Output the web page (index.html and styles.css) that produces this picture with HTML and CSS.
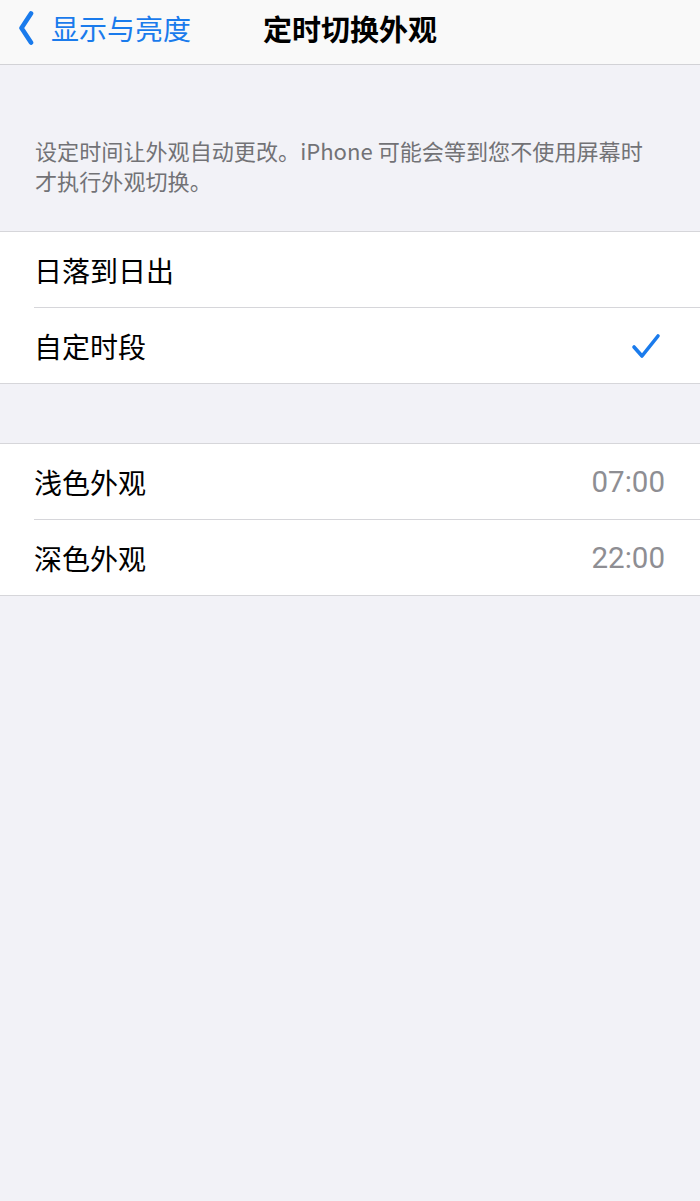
FILE: index.html
```html
<!DOCTYPE html>
<html lang="zh-CN">
<head>
<meta charset="utf-8">
<title>定时切换外观</title>
<link rel="stylesheet" href="styles.css">
</head>
<body>
<header class="nav">
  <div class="back">
    <svg class="chev" width="16" height="36" viewBox="0 0 16 36"><path d="M13 3.5 L3.5 18 L13 32.5" fill="none" stroke="#1a7bec" stroke-width="4.6" stroke-linecap="round" stroke-linejoin="round"/></svg>
    <span class="back-text">显示与亮度</span>
  </div>
  <div class="title">定时切换外观</div>
</header>
<main class="content">
  <p class="footer-note">设定时间让外观自动更改。iPhone 可能会等到您不使用屏幕时才执行外观切换。</p>
  <section class="group">
    <div class="row"><div class="row-inner"><span class="label">日落到日出</span></div></div>
    <div class="row"><div class="row-inner last"><span class="label">自定时段</span>
      <svg class="check" width="30" height="26" viewBox="0 0 30 26"><path d="M3 14 L11 23 L27 3" fill="none" stroke="#1a7bec" stroke-width="3.6" stroke-linecap="round" stroke-linejoin="round"/></svg>
    </div></div>
  </section>
  <div class="spacer"></div>
  <section class="group">
    <div class="row"><div class="row-inner"><span class="label">浅色外观</span><span class="value">07:00</span></div></div>
    <div class="row"><div class="row-inner last"><span class="label">深色外观</span><span class="value">22:00</span></div></div>
  </section>
</main>
</body>
</html>
```

FILE: styles.css
```css
html, body {
  margin: 0;
  padding: 0;
  background: #f2f2f7;
  font-family: "Noto Sans CJK SC", "Noto Sans", sans-serif;
  color: #000;
}
body {
  width: 700px;
  min-height: 1201px;
}
.nav {
  height: 64px;
  background: #f9f9f9;
  border-bottom: 1px solid #d2d2d6;
  display: flex;
  align-items: center;
  position: relative;
}
.back {
  display: flex;
  align-items: center;
  padding-left: 18px;
  gap: 17px;
  height: 100%;
  margin-top: -8px;
}
.back-text {
  font-size: 28px;
  color: #1a7bec;
  line-height: 1;
}
.title {
  position: absolute;
  left: 0;
  right: 0;
  top: 0;
  bottom: 0;
  display: flex;
  justify-content: center;
  align-items: center;
  margin-top: -8px;
  font-size: 29px;
  font-weight: 700;
  pointer-events: none;
}
.content {
  display: flex;
  flex-direction: column;
}
.footer-note {
  margin: 0;
  padding: 70px 50px 36px 35px;
  font-size: 22.1px;
  line-height: 30px;
  color: #727276;
}
.group {
  background: #fff;
  border-top: 1px solid #d6d6da;
  border-bottom: 1px solid #d6d6da;
}
.row {
  padding-left: 34px;
}
.row-inner {
  height: 75px;
  border-bottom: 1px solid #d6d6da;
  display: flex;
  align-items: center;
  justify-content: space-between;
  padding-right: 35px;
}
.row-inner.last {
  height: 75px;
  border-bottom: none;
}
.label {
  font-size: 28px;
}
.value {
  font-family: Roboto, "Noto Sans", sans-serif;
  font-size: 29.5px;
  color: #8e8e93;
}
.check {
  margin-right: 4px;
}
.spacer {
  height: 59px;
}
```
